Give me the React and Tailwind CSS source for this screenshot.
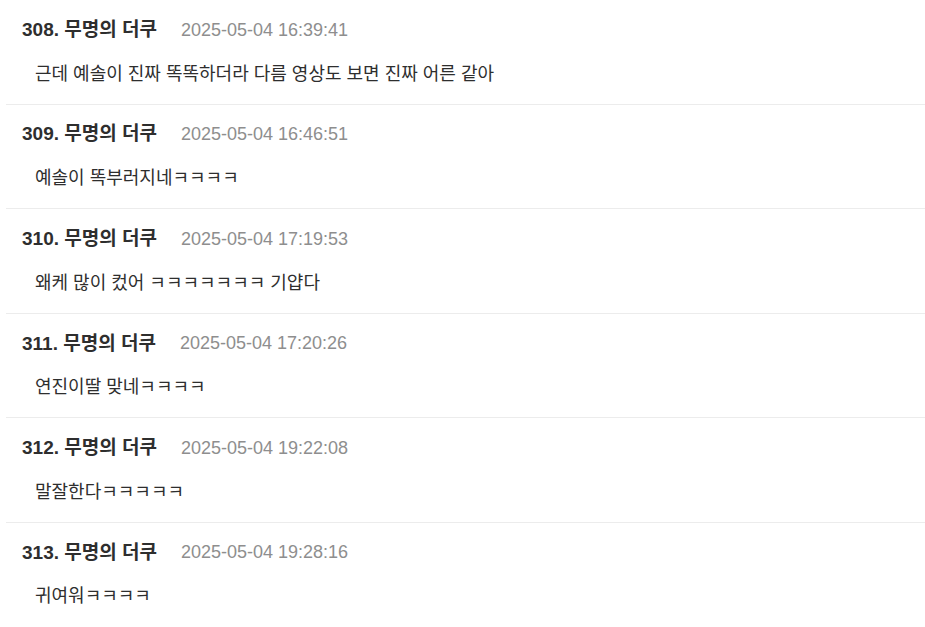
import React from 'react'

const comments = [
  { no: 308, time: '2025-05-04 16:39:41', text: '근데 예솔이 진짜 똑똑하더라 다름 영상도 보면 진짜 어른 같아' },
  { no: 309, time: '2025-05-04 16:46:51', text: '예솔이 똑부러지네ㅋㅋㅋㅋ' },
  { no: 310, time: '2025-05-04 17:19:53', text: '왜케 많이 컸어 ㅋㅋㅋㅋㅋㅋㅋ 기얍다' },
  { no: 311, time: '2025-05-04 17:20:26', text: '연진이딸 맞네ㅋㅋㅋㅋ' },
  { no: 312, time: '2025-05-04 19:22:08', text: '말잘한다ㅋㅋㅋㅋㅋ' },
  { no: 313, time: '2025-05-04 19:28:16', text: '귀여워ㅋㅋㅋㅋ' },
]

const App = () => {
  return (
    <div
      className="min-h-screen bg-white pl-[6px]"
      style={{ fontFamily: '"Liberation Sans", "Noto Sans CJK KR", sans-serif' }}
    >
      {comments.map(c => (
        <div key={c.no} className="h-[104.6px] border-b border-[#ececec] pt-[18px]">
          <div className="flex items-center pl-[16px] h-[24px]">
            <span className="text-[19px] font-bold text-[#2e2e2e]">
              {c.no}. 무명의 더쿠
            </span>
            <span className="ml-[24px] text-[18px] text-[#8e8e8e]">{c.time}</span>
          </div>
          <div className="mt-[20px] pl-[29px] h-[24px] flex items-center text-[18px] text-[#2e2e2e]">
            {c.text}
          </div>
        </div>
      ))}
    </div>
  )
}

export default App
